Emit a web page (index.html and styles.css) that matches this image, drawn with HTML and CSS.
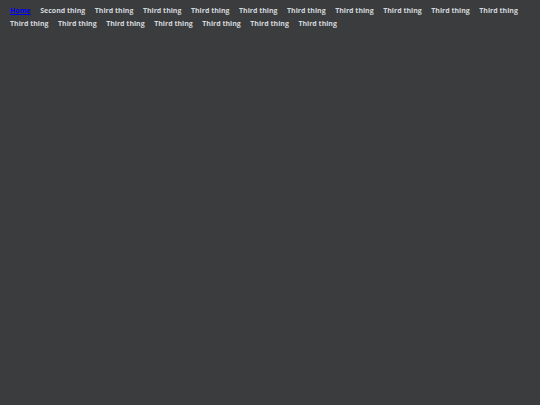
FILE: index.html
```html
<!DOCTYPE html>
<html>
<head>
<meta charset="utf-8">
<link rel="stylesheet" href="styles.css">
</head>
<body>
<ul class="nav">
<li><a class="home" href="#">Home</a></li>
<li>Second thing</li>
<li>Third thing</li>
<li>Third thing</li>
<li>Third thing</li>
<li>Third thing</li>
<li>Third thing</li>
<li>Third thing</li>
<li>Third thing</li>
<li>Third thing</li>
<li>Third thing</li>
<li>Third thing</li>
<li>Third thing</li>
<li>Third thing</li>
<li>Third thing</li>
<li>Third thing</li>
<li>Third thing</li>
<li>Third thing</li>
</ul>
</body>
</html>
```
FILE: styles.css
```css
html, body {
  margin: 0;
  padding: 0;
  background: #3b3c3e;
  height: 100%;
}
.nav {
  list-style: none;
  margin: 0;
  padding: 4px 10px 0 10px;
  display: flex;
  flex-wrap: wrap;
  column-gap: 9.5px;
  font-family: "Open Sans", sans-serif;
  font-weight: 700;
  font-size: 7px;
  line-height: 13px;
  color: #d3d7dc;
}
.home {
  color: #0000ee;
}
```
